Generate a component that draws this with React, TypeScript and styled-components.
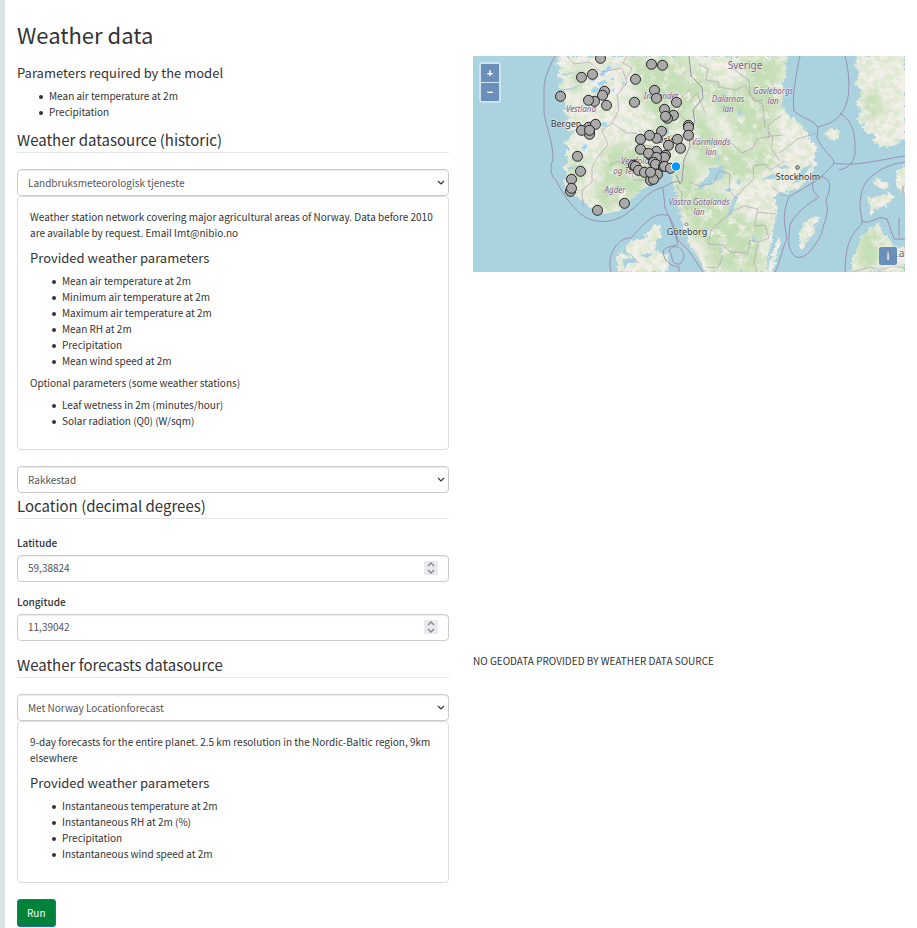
import React from 'react';
import styled, { createGlobalStyle } from 'styled-components';

const GlobalStyle = createGlobalStyle`
  *, *::before, *::after { box-sizing: border-box; }
  body {
    margin: 0;
    background: #fff;
    color: #333;
    font-family: "Source Sans Pro", "Noto Sans CJK SC", sans-serif;
    font-size: 10px;
    line-height: 16px;
  }
`;

const Page = styled.main`
  min-height: 100vh;
  border-left: 5px solid #dae6e3;
  padding: 23px 12px 1px;
`;

const Title = styled.h1`
  margin: 0 0 11px;
  font-size: 22px;
  line-height: 22px;
  font-weight: 400;
`;

const Columns = styled.div`
  display: grid;
  grid-template-columns: minmax(0, 1fr) minmax(0, 1fr);
  column-gap: 24px;
`;

const Column = styled.section``;

const SectionTitle = styled.h2<{ $top: number }>`
  margin: ${(p) => p.$top}px 0 16px;
  padding-bottom: 2px;
  border-bottom: 1px solid #e5e5e5;
  font-size: 15px;
  line-height: 20px;
  font-weight: 400;
`;

const SubTitle = styled.h3`
  margin: 9px 0 7px;
  font-size: 13px;
  line-height: 16px;
  font-weight: 400;
`;

const Paragraph = styled.p`
  margin: 0 0 6px;
`;

const List = styled.ul<{ $bottom: number }>`
  margin: 0 0 ${(p) => p.$bottom}px;
  padding-left: 32px;
  list-style: none;
`;

const Item = styled.li`
  &::before {
    content: "";
    display: inline-block;
    width: 4px;
    height: 4px;
    margin: 0 6px 0 -10px;
    border-radius: 50%;
    background: #333;
    vertical-align: middle;
  }
`;

const Card = styled.div`
  border: 1px solid #ddd;
  border-radius: 4px;
  padding: 12px;
`;

const Field = styled.div`
  display: grid;
  align-items: center;
  > * { grid-area: 1 / 1; }
`;

const controlStyle = `
  width: 100%;
  height: 27px;
  margin: 0;
  padding: 0 10px;
  border: 1px solid #ccc;
  border-radius: 4px;
  background: #fff;
  box-shadow: inset 0 1px 1px rgba(0, 0, 0, 0.08);
  color: #555;
  font: inherit;
`;

const Select = styled.select`
  ${controlStyle}
  appearance: none;
`;

const Input = styled.input`
  ${controlStyle}
  padding-bottom: 2px;
`;

const Chevron = styled.svg`
  justify-self: end;
  margin-right: 4px;
  pointer-events: none;
`;

const Stepper = styled.div`
  justify-self: end;
  display: flex;
  flex-direction: column;
  width: 14px;
  margin: 0 11px 1px 0;
  background: #e9e9ed;
`;

const StepButton = styled.button`
  display: flex;
  align-items: center;
  justify-content: center;
  height: 7px;
  padding: 0;
  border: 0;
  background: transparent;
  color: #84848a;
`;

const Label = styled.label<{ $top?: number }>`
  display: block;
  margin: ${(p) => p.$top ?? 0}px 0 4px;
  font-weight: 500;
`;

const StationField = styled(Field)`
  margin-top: 16px;
`;

const RunButton = styled.button`
  margin-top: 16px;
  height: 28px;
  padding: 0 9px;
  border: 1px solid #2e6da4;
  border-radius: 3px;
  background: #00823b;
  color: #fff;
  font: inherit;
`;

const Notice = styled.p`
  margin: 12px 0 0;
`;

const MapFrame = styled.div`
  position: relative;
  height: 216px;
  overflow: hidden;
  background: #aad3df;
`;

const MapDrawing = styled.svg`
  display: block;
  width: 100%;
  height: 100%;
  font-family: "Noto Sans", sans-serif;
`;

const ZoomControls = styled.div`
  position: absolute;
  left: 6px;
  top: 6px;
  display: grid;
  gap: 1px;
  padding: 2px;
  border-radius: 3px;
  background: rgba(255, 255, 255, 0.4);
`;

const MapButton = styled.button`
  display: flex;
  align-items: center;
  justify-content: center;
  width: 18px;
  height: 18px;
  padding: 0;
  border: 0;
  border-radius: 1px;
  background: #6a8fba;
  color: #fff;
  font: 700 11px/16px "Liberation Sans", sans-serif;
`;

const InfoButton = styled(MapButton)`
  position: absolute;
  right: 8px;
  bottom: 7px;
  border-radius: 2px;
  box-shadow: 0 0 0 2px rgba(255, 255, 255, 0.25);
  font-family: "Noto Sans", sans-serif;
  font-weight: 500;
`;

const LAND = [
  'M87 0L83 8 88 12 84 20 90 24 85 31 91 35 86 41 92 47 90 55 96 61 92 68 97 77 92 86 97 92 91 99 96 104 90 111 95 118 91 126 94 133 102 139 110 145 116 151 124 156 135 158 145 155 156 147 164 137 174 130 183 122 188 119 190 110 189 98 191 92 194 98 195 109 199 115 200 128 204 139 206 152 209 164 212 178 217 188 222 197 228 206 231 216H293L295 199 299 185 301 168 304 157 303 145 299 141 308 137 319 135 329 129 337 122 340 112 344 109 341 101 344 91 336 83 332 72 321 63 314 58 308 48 311 37 309 27 314 18 312 8 315 0Z',
  'M385 0L382 9 387 17 382 27 389 36 384 47 388 56 383 64 390 69 391 75 402 78 400 85 408 91 420 90 432 83V0Z',
  'M145 216L143 201 149 193 158 185 169 184 176 176 182 169 188 168 187 181 181 192 187 197 194 198 196 208 193 216Z',
  'M379 216L378 204 385 192 388 181 397 172 406 168 410 177 418 184 419 194 432 190V216Z',
  'M346 161L338 162 331 167 326 177 327 189 329 195 333 187 340 178 342 169 345 166Z',
  'M306 181L301 193 296 207 294 216 299 216 304 201 308 184Z',
  'M404 121L410 126 417 128 411 134 404 130 399 128Z',
  'M394 142L405 141 416 136 421 140 414 150 402 153 398 160 397 151Z',
  'M424 115L432 110V139L424 132Z',
  'M351 77L359 72 368 76 365 83 357 84Z',
];

const FORESTS = [
  'M150 0L160 8 158 20 168 28 164 40 175 52 172 60 184 66 180 78 193 85 197 73 210 70 214 55 226 48 222 32 212 25 216 12 210 0Z',
  'M216 10L228 8 232 22 247 23 250 34 240 45 230 38 222 44Z',
  'M262 0H311L308 20 303 35 310 51 298 60 304 78 288 90 262 78 257 62 238 56 236 40 264 30 276 22Z',
  'M218 56L228 55 242 76 254 91 270 88 276 96 290 88 305 100 300 112 282 116 275 127 258 121 245 131 240 113 226 108 216 92Z',
  'M205 98L221 108 226 125 240 134 256 140 257 158 271 154 274 168 292 161 296 174 286 190 291 216 240 216 232 191 214 172 208 151 199 119Z',
  'M126 150L120 133 129 118 128 96 141 88 157 93 160 80 176 83 184 98 184 116 173 129 157 146 140 156Z',
  'M96 100L104 97 114 111 108 126 98 130Z',
  'M100 15L108 10 116 17 108 34 96 29Z',
  'M386 176L400 172 414 187 410 208 390 216 383 204Z',
  'M393 31L406 40 411 52 403 65 390 60Z',
];

const BORDERS = [
  'M82 0C74 15 71 25 71 33V56C73 72 80 84 80 104C77 109 77 120 83 124C89 137 98 150 109 159C124 170 145 166 157 155C168 147 175 135 188 132C196 129 200 124 207 126',
  'M190 132L192 152 200 168 205 184 216 195 230 216',
  'M216 0L218 20 229 31 230 42 220 54 222 66 216 76 217 90 211 104 209 125 207 128 203 119',
  'M327 0C322 24 319 42 321 55C330 63 339 63 345 71L344 82C353 99 364 104 360 109L346 123 316 141C309 158 311 165 314 183C308 195 307 208 302 216',
  'M345 71C358 67 366 65 373 49C378 35 376 15 372 0M367 57C383 68 382 83 382 98C379 110 374 112 366 114M360 107C382 111 405 104 432 100',
  'M346 141C335 133 339 119 350 121C363 126 353 141 353 145C358 157 348 172 349 177C343 188 334 204 323 201C313 193 316 182 317 169C323 156 334 149 346 141Z',
  'M432 106C408 109 388 124 388 141C385 152 390 163 389 168C374 182 373 194 372 216M389 165C397 170 404 158 414 163L421 183 432 183M426 162V181M430 130V138',
  'M138 216C133 199 145 181 158 182C170 169 181 154 196 160L201 175 205 188C205 190 190 190 190 196C191 206 198 210 206 211V216M196 195C202 183 218 198 207 208C196 209 201 199 196 195',
];

const REGIONS = [
  'M94 0L101 8 116 6 129 16 149 12 154 27 144 39 146 54 139 67 129 74 135 89 126 99 119 111 119 126 109 134 110 151',
  'M139 67L154 77 163 77 168 88 181 91 184 104 179 119',
  'M136 110L144 105 157 111 161 124 177 124',
  'M154 0L150 7 159 12 153 23',
  'M189 87L197 80 211 79 213 65 205 56 208 42 217 33',
  'M226 8L235 13 233 24 245 26 246 31 263 34 272 29 281 45 289 44 292 71 300 82 298 92 307 105',
  'M258 0L260 13 276 24 277 39 288 48',
  'M224 88L240 85 251 90 256 85 269 97 280 92 284 83 298 80 310 79',
  'M309 59L295 69 296 82M343 77L325 83 306 97',
  'M216 126L227 130 241 127 246 115 257 118 256 134 263 142 271 132 281 123 280 110 292 108 297 114 312 105',
  'M271 150L285 153 281 170 292 169 296 182 285 186 277 184 275 197 257 196 250 189 235 188 238 174 247 166 260 155Z',
  'M250 199L245 212 234 211M285 187L281 206 284 216M303 158L285 156M316 140L308 139 298 130',
  'M203 129L209 137 208 147 215 153',
  'M379 216L397 211 407 214 420 210 432 212',
  'M216 45L224 37 232 57M186 71L195 73M157 198L166 207',
];

const LAKES = [
  'M225 134L228 126 233 122 237 117 235 112 242 112 250 109 252 116 248 123 240 125 238 130 233 128 229 133Z',
  'M254 164L256 153 261 141 265 137 264 144 259 155Z',
  'M251 134l5-2 3 2-4 2zM263 126l3-3 2 4-3 2z',
  'M319 128L330 112 339 108 328 125Z',
  'M289 123L300 118 309 120 297 123ZM303 111l9-2 5 3-8 1zM232 170l3 7-4 3zM279 180l5 4-5 2zM247 190l3 6-4 2z',
  'M264 55L267 53 269 58 266 60ZM249 40L252 36 254 43ZM234 85l3-5 1 6zM244 98l3 5-2 4z',
  'M193 66l3 9-2 4-2-7zM186 5l3 5-2 1zM176 92l3 6-2 2z',
  'M86 35L111 28 98 34ZM88 52L106 50 96 55ZM90 80L104 72 94 86ZM94 112L107 109 96 115ZM88 18l14-2-11 4zM150 204l10-3 4 6-8 0-5 6z',
  'M150 188l-1 9 7 4-3-8zM166 199l14-2-5 5z',
];

const MOUNTAIN_LAKES = [
  'M116 23l6-4 3 2-5 5zM126 18l5-5 3 3-5 5zM124 27l8-3 2 3-7 4zM118 34l5-4 3 4-5 4z',
  'M133 12l4-3 1 4-4 3zM137 23l4-2 0 4zM141 8l3-1 0 2zM149 27l3-2 1 4-3 1zM138 34l4-2-1 4z',
  'M128 66h5l1 4-5 1zM109 91l4-4 1 4-4 5zM117 78l3 1-2 3zM120 41l3-2 1 4z',
];

const STATIONS: [number, number][] = [
  [127, 2], [119, 18], [108, 21], [87, 40], [178, 8], [189, 9], [162, 23],
  [131, 35], [129, 39], [121, 45], [115, 44], [133, 49], [181, 34], [183, 42],
  [161, 46], [203, 46], [191, 53], [200, 59], [194, 62], [192, 60],
  [115, 71], [116, 76], [116, 78], [108, 74], [122, 68], [116, 74],
  [104, 100], [107, 115], [98, 123], [97, 135], [98, 132], [124, 154], [151, 147],
  [215, 69], [215, 71], [215, 79], [188, 75], [183, 82], [176, 79], [167, 83],
  [167, 93], [204, 83], [207, 92], [195, 89], [183, 95], [176, 98], [175, 97],
  [192, 99], [191, 101], [183, 101], [180, 106], [160, 109], [162, 110], [165, 114],
  [171, 116], [182, 108], [184, 118], [177, 124], [180, 123], [177, 116],
  [190, 110], [191, 110], [197, 112],
];

type PlaceKind = 'country' | 'city' | 'region';

const PLACES: { name: string; x: number; y: number; kind: PlaceKind }[] = [
  { name: 'Sverige', x: 272, y: 13, kind: 'country' },
  { name: 'Bergen', x: 93, y: 71, kind: 'city' },
  { name: 'Oslo', x: 193, y: 87, kind: 'city' },
  { name: 'Stockholm', x: 325, y: 124, kind: 'city' },
  { name: 'Göteborg', x: 214, y: 179, kind: 'city' },
  { name: 'Vestland', x: 108, y: 56, kind: 'region' },
  { name: 'Innlandet', x: 188, y: 43, kind: 'region' },
  { name: 'Dalarnas', x: 255, y: 46, kind: 'region' },
  { name: 'län', x: 255, y: 56, kind: 'region' },
  { name: 'Gävleborgs', x: 300, y: 38, kind: 'region' },
  { name: 'län', x: 300, y: 48, kind: 'region' },
  { name: 'Värmlands', x: 238, y: 89, kind: 'region' },
  { name: 'län', x: 238, y: 99, kind: 'region' },
  { name: 'Vestfold', x: 162, y: 108, kind: 'region' },
  { name: 'og Telemark', x: 162, y: 118, kind: 'region' },
  { name: 'Agder', x: 142, y: 137, kind: 'region' },
  { name: 'Västra Götalands', x: 226, y: 149, kind: 'region' },
  { name: 'län', x: 226, y: 159, kind: 'region' },
  { name: 'La', x: 426, y: 201, kind: 'country' },
];

const PlaceName = styled.text<{ $kind: PlaceKind }>`
  text-anchor: middle;
  paint-order: stroke;
  stroke: rgba(255, 255, 255, 0.6);
  stroke-width: 1px;
  font-size: ${(p) => (p.$kind === 'region' ? 8 : p.$kind === 'city' ? 9 : 10)}px;
  font-style: ${(p) => (p.$kind === 'region' ? 'italic' : 'normal')};
  fill: ${(p) => (p.$kind === 'city' ? '#333' : '#7d5a86')};
`;

function Shapes({ paths }: { paths: string[] }) {
  return <>{paths.map((d) => <path key={d} d={d} />)}</>;
}

function StationMap() {
  return (
    <MapFrame>
      <MapDrawing viewBox="0 0 432 216" preserveAspectRatio="xMidYMid slice" role="img" aria-label="Weather stations">
        <defs>
          <clipPath id="land">
            <Shapes paths={LAND} />
          </clipPath>
          <filter id="coast" x="0" y="0" width="100%" height="100%" colorInterpolationFilters="sRGB">
            <feTurbulence type="fractalNoise" baseFrequency="0.3" numOctaves="3" seed="8" />
            <feDisplacementMap in="SourceGraphic" scale="7" xChannelSelector="R" yChannelSelector="G" />
          </filter>
          <filter id="shore" x="-5%" y="-5%" width="110%" height="110%" colorInterpolationFilters="sRGB">
            <feTurbulence type="fractalNoise" baseFrequency="0.3" numOctaves="2" seed="3" />
            <feDisplacementMap in="SourceGraphic" scale="3" xChannelSelector="R" yChannelSelector="G" />
          </filter>
          <filter id="woodland" x="-5%" y="-5%" width="110%" height="110%" colorInterpolationFilters="sRGB">
            <feGaussianBlur in="SourceGraphic" stdDeviation="4" result="soft" />
            <feTurbulence type="fractalNoise" baseFrequency="0.11" numOctaves="5" seed="5" />
            <feColorMatrix values="0 0 0 0 1  0 0 0 0 1  0 0 0 0 1  4 0 0 0 -1" result="grain" />
            <feComposite in="soft" in2="grain" operator="in" />
          </filter>
          <filter id="speckle" x="0" y="0" width="100%" height="100%" colorInterpolationFilters="sRGB">
            <feTurbulence type="fractalNoise" baseFrequency="0.15" numOctaves="4" seed="21" />
            <feColorMatrix values="0 0 0 0 0.80  0 0 0 0 0.89  0 0 0 0 0.74  5 0 0 0 -2.1" />
          </filter>
        </defs>
        <rect width="432" height="216" fill="#aad3df" />
        <g filter="url(#coast)">
          <rect width="432" height="216" fill="#aad3df" />
          <g fill="#f2efe9"><Shapes paths={LAND} /></g>
          <g clipPath="url(#land)">
            <rect width="432" height="216" filter="url(#speckle)" opacity="0.55" />
            <g fill="#c4deb6" filter="url(#woodland)"><Shapes paths={FORESTS} /></g>
          </g>
        </g>
        <g fill="#aad3df" filter="url(#shore)"><Shapes paths={LAKES} /></g>
        <g fill="#a5d5f5" filter="url(#shore)"><Shapes paths={MOUNTAIN_LAKES} /></g>
        <g fill="none" stroke="#a893ad" strokeWidth="0.7" strokeLinejoin="round" opacity="0.8">
          <Shapes paths={REGIONS} />
        </g>
        <g fill="none" stroke="#9b90b0" strokeWidth="1" strokeLinejoin="round">
          <Shapes paths={BORDERS} />
        </g>
        <circle cx="324.5" cy="111.5" r="1.8" fill="#bbb" stroke="#555" />
        <circle cx="213.5" cy="168.5" r="1.3" fill="#fff" stroke="#555" strokeWidth="0.7" />
        {PLACES.map((p) => (
          <PlaceName key={`${p.name}${p.x}`} x={p.x} y={p.y} $kind={p.kind}>{p.name}</PlaceName>
        ))}
        <g fill="#aaa" stroke="#222">
          {STATIONS.map(([x, y], i) => <circle key={i} cx={x + 0.5} cy={y + 0.3} r="5" />)}
        </g>
        <circle cx="203" cy="110.5" r="4.7" fill="#0099ff" stroke="#fff" />
      </MapDrawing>
      <ZoomControls>
        <MapButton type="button" aria-label="Zoom in">+</MapButton>
        <MapButton type="button" aria-label="Zoom out">−</MapButton>
      </ZoomControls>
      <InfoButton type="button" aria-label="Attributions">i</InfoButton>
    </MapFrame>
  );
}

function SelectField({ label, value, as: Wrapper = Field }: { label: string; value: string; as?: React.ElementType }) {
  return (
    <Wrapper>
      <Select aria-label={label} defaultValue={value}>
        <option>{value}</option>
      </Select>
      <Chevron width="8" height="6" viewBox="0 0 8 6" fill="none" stroke="#333" strokeWidth="1.2">
        <path d="M1 1l3 3 3-3" />
      </Chevron>
    </Wrapper>
  );
}

function NumberField({ id, label, value, top }: { id: string; label: string; value: string; top?: number }) {
  return (
    <>
      <Label htmlFor={id} $top={top}>{label}</Label>
      <Field>
        <Input id={id} type="text" inputMode="decimal" defaultValue={value} />
        <Stepper>
          {['M1 4l3-3 3 3', 'M1 1l3 3 3-3'].map((d, i) => (
            <StepButton key={d} type="button" tabIndex={-1} aria-label={`${i ? 'Decrease' : 'Increase'} ${label}`}>
              <svg width="8" height="5" viewBox="0 0 8 5" fill="none" stroke="currentColor" strokeWidth="1.3">
                <path d={d} />
              </svg>
            </StepButton>
          ))}
        </Stepper>
      </Field>
    </>
  );
}

function Items({ items, bottom }: { items: string[]; bottom: number }) {
  return <List $bottom={bottom}>{items.map((item) => <Item key={item}>{item}</Item>)}</List>;
}

export default function App() {
  return (
    <>
      <GlobalStyle />
      <Page>
        <Title>Weather data</Title>
        <Columns>
          <Column>
            <SubTitle>Parameters required by the model</SubTitle>
            <Items items={['Mean air temperature at 2m', 'Precipitation']} bottom={10} />
            <SectionTitle $top={10}>Weather datasource (historic)</SectionTitle>
            <SelectField label="Weather datasource" value="Landbruksmeteorologisk tjeneste" />
            <Card>
              <Paragraph>
                Weather station network covering major agricultural areas of Norway. Data before 2010 are available by
                request. Email lmt@nibio.no
              </Paragraph>
              <SubTitle>Provided weather parameters</SubTitle>
              <Items
                items={[
                  'Mean air temperature at 2m',
                  'Minimum air temperature at 2m',
                  'Maximum air temperature at 2m',
                  'Mean RH at 2m',
                  'Precipitation',
                  'Mean wind speed at 2m',
                ]}
                bottom={6}
              />
              <Paragraph>Optional parameters (some weather stations)</Paragraph>
              <Items items={['Leaf wetness in 2m (minutes/hour)', 'Solar radiation (Q0) (W/sqm)']} bottom={8} />
            </Card>
            <SelectField label="Weather station" value="Rakkestad" as={StationField} />
            <SectionTitle $top={3}>Location (decimal degrees)</SectionTitle>
            <NumberField id="latitude" label="Latitude" value="59,38824" />
            <NumberField id="longitude" label="Longitude" value="11,39042" top={12} />
          </Column>
          <Column>
            <StationMap />
          </Column>
          <Column>
            <SectionTitle $top={14}>Weather forecasts datasource</SectionTitle>
            <SelectField label="Weather forecasts datasource" value="Met Norway Locationforecast" />
            <Card>
              <Paragraph>
                9-day forecasts for the entire planet. 2.5 km resolution in the Nordic-Baltic region, 9km elsewhere
              </Paragraph>
              <SubTitle>Provided weather parameters</SubTitle>
              <Items
                items={[
                  'Instantaneous temperature at 2m',
                  'Instantaneous RH at 2m (%)',
                  'Precipitation',
                  'Instantaneous wind speed at 2m',
                ]}
                bottom={8}
              />
            </Card>
          </Column>
          <Column>
            <Notice>NO GEODATA PROVIDED BY WEATHER DATA SOURCE</Notice>
          </Column>
        </Columns>
        <RunButton type="button">Run</RunButton>
      </Page>
    </>
  );
}
